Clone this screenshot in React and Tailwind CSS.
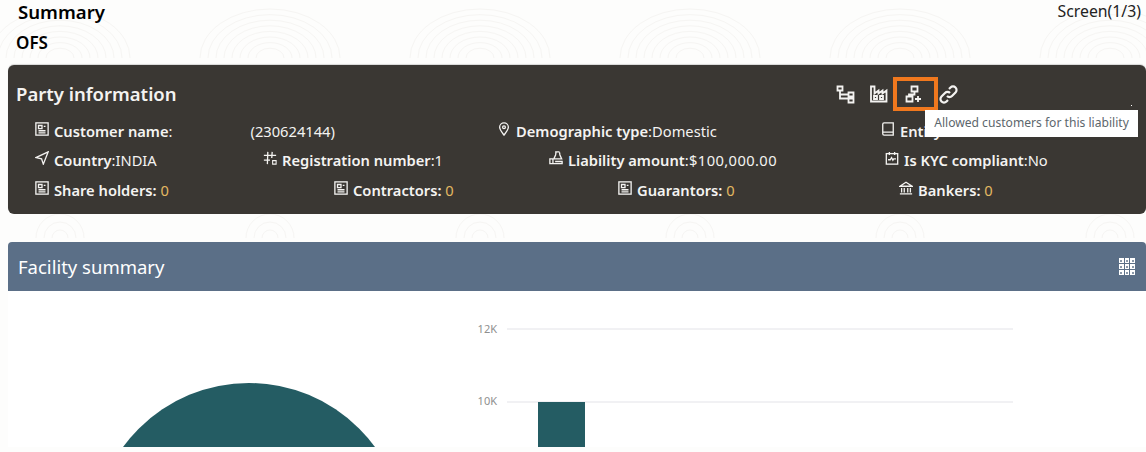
const font = { fontFamily: '"Noto Sans", "Open Sans", sans-serif' };

const Stroke = ({ children, size = 14, vb = 16, sw = 1.5 }) => (
  <svg width={size} height={size} viewBox={`0 0 ${vb} ${vb}`} fill="none" stroke="currentColor" strokeWidth={sw} className="shrink-0">
    {children}
  </svg>
);

const DocIcon = () => (
  <Stroke>
    <rect x="1" y="1" width="14" height="14" />
    <path d="M4 4h4v3.500H4zM4 10h8M4 12.500h8M10 5h2" />
  </Stroke>
);
const NavIcon = () => (
  <Stroke>
    <path d="M15 1 1 7.500l6.500 1.500L9.500 15z" />
  </Stroke>
);
const HashIcon = () => (
  <Stroke>
    <path d="M5.500 1 5 15M10.500 1 10 8M1 5h14M1 10.500h7" />
    <path d="M11 11h4v4h-4z" strokeWidth="1.200" />
  </Stroke>
);
const PinIcon = () => (
  <Stroke>
    <path d="M8 15C5 11 3 8.500 3 6a5 5 0 0 1 10 0c0 2.500-2 5-5 9z" />
    <circle cx="8" cy="6" r="1.600" />
  </Stroke>
);
const MoneyIcon = () => (
  <Stroke>
    <path d="M7 1h5M8 1.500 7.500 4.500 5.500 9h9l-2-4.500L12 1.500" />
    <path d="M1 9h3.500v5.500H1zM4.500 14.500H15v-2.500H7" />
  </Stroke>
);
const BookIcon = () => (
  <Stroke>
    <path d="M2 2.500A1.500 1.500 0 0 1 3.500 1H14v14H3.500A1.500 1.500 0 0 1 2 13.500zM2 11.500h12" />
  </Stroke>
);
const KycIcon = () => (
  <Stroke>
    <rect x="1.500" y="3" width="13" height="12" />
    <path d="M5 1v3.500M11 1v3.500M3.500 10h2.500l1.500-2.500 1.500 3 1-1.500h2.500" />
  </Stroke>
);
const BankIcon = () => (
  <Stroke>
    <path d="M1 6 8 1.500 15 6zM3 8v5M6 8v5M10 8v5M13 8v5M1 14.800h14" />
  </Stroke>
);

const Field = ({ icon, label, children }) => (
  <div className="flex items-center gap-[5px] whitespace-nowrap">
    <span className="-mt-[4px]">{icon}</span>
    <span>
      <span className="font-semibold">{label}</span>
      {children}
    </span>
  </div>
);

const Zero = () => <span className="text-[#e3b862]"> 0</span>;

const Background = () => (
  <svg className="absolute inset-0 w-full h-full" viewBox="0 0 1146 452" fill="none" stroke="#f6f5f3" strokeWidth="1">
    {[60, 270, 480, 690, 900, 1110].map(cx =>
      [14, 22, 30, 38, 46, 54, 62, 70].map(r => (
        <path key={`${cx}-${r}`} d={`M${cx - r} 58a${r} ${r * 0.7} 0 0 1 ${r * 2} 0`} />
      ))
    )}
    {[60, 270, 480, 690, 900, 1110].map(cx =>
      [8, 16, 24].map(r => (
        <path key={`b${cx}-${r}`} d={`M${cx - r} 238a${r} ${r} 0 0 1 ${r * 2} 0`} />
      ))
    )}
  </svg>
);

export default function App() {
  return (
    <div className="relative h-[452px] w-[1146px] overflow-hidden bg-[#fdfdfc] text-black" style={font}>
      <Background />
      <div className="relative">
        <div className="flex justify-between pl-[18px] pr-[5px] h-[24px] items-center">
          <h1 className="text-[18.600px] font-semibold">Summary</h1>
          <span className="text-[15.800px] text-[#222]">Screen(1/3)</span>
        </div>
        <div className="pl-[16px] h-[41px] pt-[7px] text-[17px] font-semibold leading-[24px]">OFS</div>

        <section className="relative ml-[8px] h-[149px] rounded-[6px] bg-[#3a3733] text-[#f4f3f1] text-[14.700px] shadow-[0_-1px_1px_rgba(0,0,0,0.15)]">
          <div className="flex items-center justify-between pl-[8px] pt-[12px] pr-[188px] h-[46px]">
            <h2 className="text-[18.500px] font-semibold">Party information</h2>
            <div className="flex items-center">
              <span className="w-[34px] flex justify-center">
                <Stroke size={19} vb={19} sw={1.800}>
                  <path d="M1.500 1.500h5v4h-5zM12.500 7.500h5v4h-5zM12.500 13.500h5v4h-5zM4 5.500v8h8.500M4 9.500h8.500" />
                </Stroke>
              </span>
              <span className="w-[34px] flex justify-center -mr-[2px]">
                <Stroke size={18} vb={18} sw={1.800}>
                  <path d="M1 16.500V1.500h3.500v7l4-3v3l4-3v3l4-3v11zM4 11h3v3H4zM10 11h3v3h-3z" />
                </Stroke>
              </span>
              <span className="w-[45px] h-[34px] -ml-[1px] flex justify-center items-center border-[4px] border-[#f0781e] pr-[4px]">
                <Stroke size={18} vb={18} sw={1.800}>
                  <path d="M6.500 1.500h6v5h-6zM9.500 6.500v3H4v2M1.500 11.500h6v5h-6zM13 11v6M10 14h6" />
                </Stroke>
              </span>
              <span className="w-[20px] flex justify-end">
                <Stroke size={19} vb={19} sw={2.200}>
                  <path d="M8 11a3.500 3.500 0 0 0 5 0l3.500-3.500a3.500 3.500 0 0 0-5-5L10 4" />
                  <path d="M11 8a3.500 3.500 0 0 0-5 0l-3.500 3.500a3.500 3.500 0 0 0 5 5L9 15" />
                </Stroke>
              </span>
            </div>
          </div>

          <div className="flex flex-col pl-[27px] mt-[9px] gap-[7px]">
            <div className="grid grid-cols-[462px_384px_1fr] h-[22px] items-center">
              <Field icon={<DocIcon />} label="Customer name">
                <span>:</span>
                <span className="ml-[78px]">(230624144)</span>
              </Field>
              <Field icon={<PinIcon />} label="Demographic type">:Domestic</Field>
              <Field icon={<BookIcon />} label="Entity" />
            </div>
            <div className="grid grid-cols-[228px_286px_336px_1fr] h-[22px] items-center">
              <Field icon={<NavIcon />} label="Country">:INDIA</Field>
              <Field icon={<HashIcon />} label="Registration number">:1</Field>
              <Field icon={<MoneyIcon />} label="Liability amount">
                <span className="tracking-[0.4px]">:$100,000.00</span>
              </Field>
              <Field icon={<KycIcon />} label="Is KYC compliant">:No</Field>
            </div>
            <div className="grid grid-cols-[299px_284px_281px_1fr] h-[22px] mt-[1px] items-center">
              <Field icon={<DocIcon />} label="Share holders:"><Zero /></Field>
              <Field icon={<DocIcon />} label="Contractors:"><Zero /></Field>
              <Field icon={<DocIcon />} label="Guarantors:"><Zero /></Field>
              <Field icon={<BankIcon />} label="Bankers:"><Zero /></Field>
            </div>
          </div>

          <div className="absolute left-[917px] top-[45px] h-[27px] w-[213px] bg-white flex items-center justify-center text-[12.100px] text-[#5c666c] whitespace-nowrap">
            Allowed customers for this liability
          </div>
          <span className="absolute left-[1123px] top-[40px] h-[1px] w-[1px] bg-white" />
        </section>

        <section className="ml-[8px] mt-[28px] h-[205px] rounded-t-[4px] bg-white overflow-hidden">
          <div className="flex h-[49px] items-center justify-between bg-[#5b6f87] pl-[10px] pr-[11px]">
            <h2 className="text-[18.500px] text-white">Facility summary</h2>
            <div className="grid grid-cols-3 gap-[1px] w-[16px]">
              {[...Array(9)].map((_, i) => (
                <span key={i} className="h-[5px] bg-white flex items-center justify-center">
                  <span className="h-[2px] w-[2px] bg-[#8b99aa]" />
                </span>
              ))}
            </div>
          </div>
          <svg width="1138" height="156" viewBox="0 0 1138 156" className="block" style={font}>
            <circle cx="241" cy="248" r="156" fill="#245c63" />
            <line x1="499" x2="1005" y1="38" y2="38" stroke="#e3e3e8" />
            <line x1="499" x2="1005" y1="111" y2="111" stroke="#e3e3e8" />
            <rect x="530" y="111" width="47" height="45" fill="#245c63" />
            <text x="489" y="42" textAnchor="end" fontSize="11" fill="#8f8f8f">12K</text>
            <text x="489" y="114" textAnchor="end" fontSize="11" fill="#8f8f8f">10K</text>
          </svg>
        </section>
      </div>
    </div>
  );
}
